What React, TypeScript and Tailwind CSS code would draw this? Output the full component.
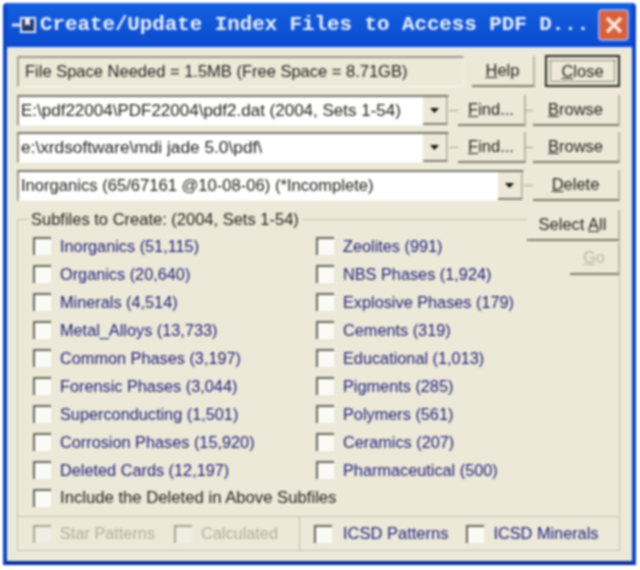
import React from 'react';

const raised = "border-b-2 border-r-2 border-b-[#7f7c6c] border-r-[#b8b5a4] bg-[#ece9d8]";
const sunken = "border-t-2 border-l-2 border-t-[#77756a] border-l-[#99978a] border-b border-r border-b-[#f7f6ef] border-r-[#f7f6ef]";

const leftItems = [
    'Inorganics (51,115)', 'Organics (20,640)', 'Minerals (4,514)', 'Metal_Alloys (13,733)', 'Common Phases (3,197)',
    'Forensic Phases (3,044)', 'Superconducting (1,501)', 'Corrosion Phases (15,920)', 'Deleted Cards (12,197)',
];
const rightItems = [
    'Zeolites (991)', 'NBS Phases (1,924)', 'Explosive Phases (179)', 'Cements (319)', 'Educational (1,013)',
    'Pigments (285)', 'Polymers (561)', 'Ceramics (207)', 'Pharmaceutical (500)',
];

const Box = ({ faded }: { faded?: boolean }) => (
    <span className={`block w-[18px] h-[18px] shrink-0 border-t-2 border-l-2 ${faded ? 'border-t-[#a5a392] border-l-[#a5a392] bg-[#f0eee2]' : 'border-t-[#66645a] border-l-[#66645a] bg-[#fbfbf6]'}`} />
);

const Check = ({ label, color = 'text-[#1c1c78]', size = 'text-[16.3px]', className = '' }: { label: string; color?: string; size?: string; className?: string }) => (
    <div className={`flex items-center gap-[9px] h-[28px] ${className}`}>
        <Box />
        <span className={`${color} ${size} whitespace-nowrap`}>{label}</span>
    </div>
);

const Btn = ({ u, rest, w, className = '' }: { u: string; rest: string; w: string; className?: string }) => (
    <button className={`${w} h-[31px] ${raised} shrink-0 text-[16.5px] text-[#1e1e1a] ${className}`}>
        <span className="underline">{u}</span>{rest}
    </button>
);

const Arrow = () => (
    <span className={`w-[25px] h-full shrink-0 flex items-center justify-center ${raised}`}>
        <svg width="9" height="5" viewBox="0 0 9 5"><path d="M0 0h9L4.500 5z" fill="#111" /></svg>
    </span>
);

const Combo = ({ text, w, size }: { text: string; w: string; size: string }) => (
    <div className={`${w} h-[31px] ${sunken} bg-white flex items-center shrink-0`}>
        <span className={`flex-1 pl-[2px] ${size} text-[#1e1e1a] whitespace-nowrap overflow-hidden`}>{text}</span>
        <Arrow />
    </div>
);

const Dash = () => <span className="w-[9px] h-[1px] bg-[#a5a392] shrink-0" />;

export default function App() {
    return (
        <div className="w-[640px] h-[570px] bg-white p-[3px] pr-[4px] pb-[5px]" style={{ fontFamily: '"Liberation Sans", Arial, sans-serif' }}>
            <div className="w-full h-full [filter:blur(0.8px)] rounded-t-[4px] bg-[#0f52d8] flex flex-col overflow-hidden border-b-[4px] border-x-[4px] border-x-[#0b46c8] border-b-[#0a2f96]">
                <div className="h-[44px] shrink-0 flex items-center pl-[5px] pr-[3px] bg-gradient-to-b from-[#1560e0] to-[#0c4ad0]">
                    <svg width="24" height="18" viewBox="0 0 24 18" className="shrink-0">
                        <path d="M0 9h9" stroke="#dbe6f5" strokeWidth="3" fill="none" />
                        <rect x="9" y="2" width="14" height="14" fill="#24386a" stroke="#dbe6f5" strokeWidth="2" />
                        <path d="M13 2v8l2.500-2 2.500 2V2z" fill="#eef0f2" />
                    </svg>
                    <span className="ml-[4px] flex-1 font-['Liberation_Mono'] font-bold text-[20.8px] text-[#e6eefa] whitespace-nowrap">Create/Update Index Files to Access PDF D...</span>
                    <span className="w-[31px] h-[32px] rounded-[4px] bg-[#d9603a] border-2 border-[#9fa3e0] flex items-center justify-center shrink-0">
                        <svg width="18" height="18" viewBox="0 0 18 18"><path d="M2 2l14 14M16 2L2 16" stroke="#fbe6d8" strokeWidth="3.500" /></svg>
                    </span>
                </div>

                <div className="flex-1 bg-[#ece9d8] pl-[10px] pt-[5px] flex flex-col relative border-t-[3px] border-[#dfe6ee]">
                    <div className="flex items-center h-[32px]">
                        <div className="w-[447px] h-[31px] border-t-2 border-l-2 border-t-[#99978a] border-l-[#a5a392] border-b border-r border-b-[#f7f6ef] border-r-[#f7f6ef] flex items-center pl-[6px] text-[16.5px] text-[#1e1e1a] whitespace-nowrap">
                            File Space Needed = 1.5MB (Free Space = 8.71GB)
                        </div>
                        <Btn u="H" rest="elp" w="w-[63px]" className="ml-[8px]" />
                        <button className="ml-[10px] w-[75px] h-[32px] border-2 border-[#2a2a24] shrink-0 text-[16.5px] text-[#1e1e1a] flex items-center justify-center">
                            <span className="border border-dotted border-[#333] w-[65px] h-[22px] leading-[20px]"><span className="underline">C</span>lose</span>
                        </button>
                    </div>

                    <div className="flex items-center h-[31px] mt-[8px]">
                        <Combo text="E:\pdf22004\PDF22004\pdf2.dat (2004, Sets 1-54)" w="w-[432px]" size="text-[17px]" />
                        <Dash />
                        <Btn u="F" rest="ind..." w="w-[68px]" />
                        <Dash />
                        <Btn u="B" rest="rowse" w="w-[87px]" className="-ml-[2px]" />
                    </div>
                    <div className="flex items-center h-[31px] mt-[6px]">
                        <Combo text="e:\xrdsoftware\mdi jade 5.0\pdf\" w="w-[432px]" size="text-[17.3px]" />
                        <Dash />
                        <Btn u="F" rest="ind..." w="w-[68px]" />
                        <Dash />
                        <Btn u="B" rest="rowse" w="w-[87px]" className="-ml-[2px]" />
                    </div>
                    <div className="flex items-center h-[31px] mt-[7px]">
                        <Combo text="Inorganics (65/67161 @10-08-06) (*Incomplete)" w="w-[507px]" size="text-[16.6px]" />
                        <Dash />
                        <Btn u="D" rest="elete" w="w-[87px]" />
                    </div>

                    <fieldset className="mt-[9px] w-[603px] border-t border-x border-[#c4c1b0] pl-[15px] h-[306px] flex-none min-w-0">
                        <legend className="-ml-[5px] px-[3px] text-[16.5px] text-[#1e1e1a] leading-[19px]">Subfiles to Create: (2004, Sets 1-54)</legend>
                        <div className="grid grid-cols-[283px_1fr] mt-[3px]">
                            <div className="flex flex-col">
                                {leftItems.map(item => <Check key={item} label={item} />)}
                            </div>
                            <div className="flex flex-col">
                                {rightItems.map(item => <Check key={item} label={item} />)}
                            </div>
                        </div>
                        <Check label="Include the Deleted in Above Subfiles" color="text-[#1e1e1a]" size="text-[16.7px]" />
                    </fieldset>

                    <div className="w-[603px] h-[35px] border border-[#c4c1b0] flex items-center">
                        <div className="w-[282px] h-full border-r border-[#c4c1b0] flex items-center pl-[15px] text-[#b0ae9f] text-[16.3px]">
                            <Box faded />
                            <span className="ml-[9px]">Star Patterns</span>
                            <span className="ml-[19px]"><Box faded /></span>
                            <span className="ml-[9px]">Calculated</span>
                        </div>
                        <Check label="ICSD Patterns" className="ml-[14px] gap-[11px]" size="text-[16.5px]" />
                        <Check label="ICSD Minerals" className="ml-[18px] gap-[7px]" size="text-[16.3px]" />
                    </div>

                    <div className="absolute left-[520px] top-[160px] flex flex-col items-end gap-[2px] w-[93px]">
                        <button className={`w-[93px] h-[31px] ${raised} text-[16.5px] text-[#1e1e1a]`}>Select <span className="underline">A</span>ll</button>
                        <button className={`w-[50px] h-[32px] ${raised} text-[16px] text-[#b8b6a6]`}><span className="underline">G</span>o</button>
                    </div>
                </div>
            </div>
        </div>
    );
}
